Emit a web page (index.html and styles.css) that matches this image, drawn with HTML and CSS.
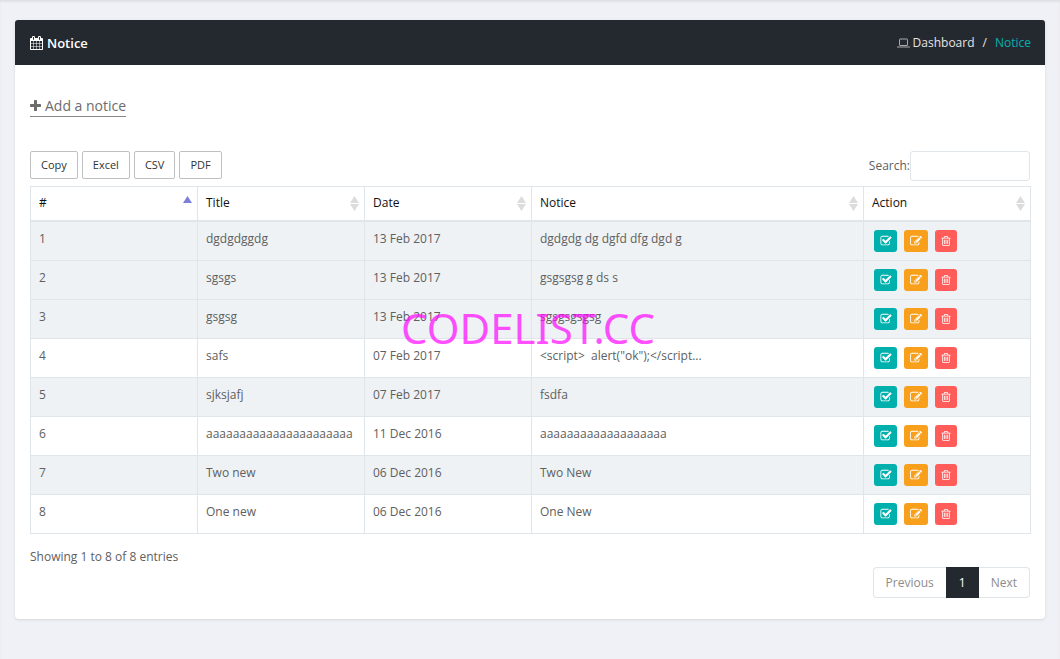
FILE: index.html
```html
<!DOCTYPE html>
<html lang="en">
<head>
<meta charset="utf-8">
<title>Notice</title>
<link rel="stylesheet" href="styles.css">
</head>
<body>
<svg class="sprite" aria-hidden="true">
  <symbol id="calendar" viewBox="64 0 1664 1792"><path d="M192 1664h288v-288h-288v288zm352 0h320v-288h-320v288zm-352-352h288v-320h-288v320zm352 0h320v-320h-320v320zm-352-384h288v-288h-288v288zm736 736h320v-288h-320v288zm-384-736h320v-288h-320v288zm768 736h288v-288h-288v288zm-384-352h320v-320h-320v320zm-352-864v-288q0-13-9.500-22.500t-22.500-9.500h-64q-13 0-22.500 9.500t-9.500 22.500v288q0 13 9.500 22.500t22.500 9.500h64q13 0 22.500-9.500t9.500-22.500zm736 864h288v-320h-288v320zm-384-384h320v-288h-320v288zm384 0h288v-288h-288v288zm32-480v-288q0-13-9.500-22.500t-22.500-9.500h-64q-13 0-22.500 9.500t-9.500 22.500v288q0 13 9.500 22.500t22.500 9.500h64q13 0 22.500-9.500t9.500-22.500zm384-64v1280q0 52-38 90t-90 38h-1408q-52 0-90-38t-38-90v-1280q0-52 38-90t90-38h128v-96q0-66 47-113t113-47h64q66 0 113 47t47 113v96h384v-96q0-66 47-113t113-47h64q66 0 113 47t47 113v96h128q52 0 90 38t38 90z"/></symbol>
  <symbol id="plus" viewBox="192 128 1408 1408"><path d="M1600 736v192q0 40-28 68t-68 28h-416v416q0 40-28 68t-68 28h-192q-40 0-68-28t-28-68v-416h-416q-40 0-68-28t-28-68v-192q0-40 28-68t68-28h416v-416q0-40 28-68t68-28h192q40 0 68 28t28 68v416h416q40 0 68 28t28 68z"/></symbol>
  <symbol id="laptop" viewBox="0 0 13 10"><path fill="none" stroke="currentColor" d="M2.500 7V1.500q0-.5.5-.5h7q.5 0 .5.500V7q0 .5-.5.500H3Q2.500 7.500 2.500 7z"/><path d="M0 8.500h13v.5q0 .6-1 .6H1Q0 9.600 0 9z"/></symbol>
  <symbol id="check" viewBox="0 0 1792 1792"><path d="M1472 930v318q0 119-84.500 203.500t-203.500 84.500h-832q-119 0-203.500-84.500t-84.500-203.500v-832q0-119 84.500-203.500t203.500-84.500h832q63 0 117 25 15 7 18 23 3 17-9 29l-49 49q-10 10-23 10-3 0-9-2-23-6-45-6h-832q-66 0-113 47t-47 113v832q0 66 47 113t113 47h832q66 0 113-47t47-113v-254q0-13 9-22l64-64q10-10 23-10 6 0 12 3 20 8 20 29zm231-489l-814 814q-24 24-57 24t-57-24l-430-430q-24-24-24-57t24-57l110-110q24-24 57-24t57 24l263 263 647-647q24-24 57-24t57 24l110 110q24 24 24 57t-24 57z"/></symbol>
  <symbol id="edit" viewBox="0 0 1792 1792"><path d="M888 1184l116-116-152-152-116 116v56h96v96h56zm440-720q-16-16-33 1l-350 350q-17 17-1 33t33-1l350-350q17-17 1-33zm80 594v190q0 119-84.500 203.500t-203.500 84.500h-832q-119 0-203.500-84.500t-84.500-203.500v-832q0-119 84.500-203.500t203.500-84.500h832q63 0 117 25 15 7 18 23 3 17-10 29l-49 49q-14 14-32 8-23-6-45-6h-832q-66 0-113 47t-47 113v832q0 66 47 113t113 47h832q66 0 113-47t47-113v-126q0-13 9-22l64-64q15-15 35-7t20 29zm-96-738l288 288-672 672h-288v-288zm444 132l-92 92-288-288 92-92q28-28 68-28t68 28l152 152q28 28 28 68t-28 68z"/></symbol>
  <symbol id="trash" viewBox="128 0 1536 1792"><path d="M704 736v576q0 14-9 23t-23 9h-64q-14 0-23-9t-9-23v-576q0-14 9-23t23-9h64q14 0 23 9t9 23zm256 0v576q0 14-9 23t-23 9h-64q-14 0-23-9t-9-23v-576q0-14 9-23t23-9h64q14 0 23 9t9 23zm256 0v576q0 14-9 23t-23 9h-64q-14 0-23-9t-9-23v-576q0-14 9-23t23-9h64q14 0 23 9t9 23zm128 724v-948h-896v948q0 22 7 40.500t14.500 27 10.500 8.500h832q3 0 10.500-8.500t14.500-27 7-40.500zm-672-1076h448l-48-117q-7-9-17-11h-317q-10 2-17 11zm928 32v64q0 14-9 23t-23 9h-96v948q0 83-47 143.500t-113 60.500h-832q-66 0-113-58.500t-47-141.500v-952h-96q-14 0-23-9t-9-23v-64q0-14 9-23t23-9h309l70-167q15-37 54-63t79-26h320q40 0 79 26t54 63l70 167h309q14 0 23 9t9 23z"/></symbol>
  <symbol id="sort" viewBox="0 0 9 15"><path d="M0 7 4.500 0 9 7zM0 8h9L4.500 15z"/></symbol>
  <symbol id="asc" viewBox="0 0 9 15"><path d="M0 7 4.500 0 9 7z"/></symbol>
</svg>
<main class="panel">
  <header class="panel-head">
    <h1 class="title"><svg class="icon-calendar"><use href="#calendar"/></svg>Notice</h1>
    <nav class="crumbs" aria-label="Breadcrumb">
      <a class="crumb" href="#"><svg class="icon-laptop"><use href="#laptop"/></svg>Dashboard</a>
      <span>/</span>
      <a class="crumb current" href="#">Notice</a>
    </nav>
  </header>
  <div class="panel-body">
    <a class="add" href="#"><svg class="icon-plus"><use href="#plus"/></svg>Add a notice</a>
    <div class="toolbar">
      <div class="exports">
        <button class="export" type="button">Copy</button>
        <button class="export" type="button">Excel</button>
        <button class="export" type="button">CSV</button>
        <button class="export" type="button">PDF</button>
      </div>
      <div class="search"><label for="search">Search:</label><input class="search-box" id="search" type="search"></div>
    </div>
    <div class="table-area">
      <table class="notices">
        <colgroup><col class="narrow"><col class="narrow"><col class="narrow"><col class="wide"><col class="narrow"></colgroup>
        <thead>
          <tr>
            <th><div class="head">#<svg class="sort active"><use href="#asc"/></svg></div></th>
            <th><div class="head">Title<svg class="sort"><use href="#sort"/></svg></div></th>
            <th><div class="head">Date<svg class="sort"><use href="#sort"/></svg></div></th>
            <th><div class="head">Notice<svg class="sort"><use href="#sort"/></svg></div></th>
            <th><div class="head">Action<svg class="sort"><use href="#sort"/></svg></div></th>
          </tr>
        </thead>
        <tbody>
          <tr class="shade"><td>1</td><td>dgdgdggdg</td><td>13 Feb 2017</td><td>dgdgdg dg dgfd dfg dgd g</td><td><div class="actions"><button class="act view" type="button" aria-label="View"><svg><use href="#check"/></svg></button><button class="act edit" type="button" aria-label="Edit"><svg><use href="#edit"/></svg></button><button class="act remove" type="button" aria-label="Delete"><svg><use href="#trash"/></svg></button></div></td></tr>
          <tr class="shade"><td>2</td><td>sgsgs</td><td>13 Feb 2017</td><td>gsgsgsg g ds s</td><td><div class="actions"><button class="act view" type="button" aria-label="View"><svg><use href="#check"/></svg></button><button class="act edit" type="button" aria-label="Edit"><svg><use href="#edit"/></svg></button><button class="act remove" type="button" aria-label="Delete"><svg><use href="#trash"/></svg></button></div></td></tr>
          <tr class="shade"><td>3</td><td>gsgsg</td><td>13 Feb 2017</td><td>sgsgsgsgsg</td><td><div class="actions"><button class="act view" type="button" aria-label="View"><svg><use href="#check"/></svg></button><button class="act edit" type="button" aria-label="Edit"><svg><use href="#edit"/></svg></button><button class="act remove" type="button" aria-label="Delete"><svg><use href="#trash"/></svg></button></div></td></tr>
          <tr><td>4</td><td>safs</td><td>07 Feb 2017</td><td>&lt;script&gt;&nbsp; alert("ok");&lt;/script...</td><td><div class="actions"><button class="act view" type="button" aria-label="View"><svg><use href="#check"/></svg></button><button class="act edit" type="button" aria-label="Edit"><svg><use href="#edit"/></svg></button><button class="act remove" type="button" aria-label="Delete"><svg><use href="#trash"/></svg></button></div></td></tr>
          <tr class="shade"><td>5</td><td>sjksjafj</td><td>07 Feb 2017</td><td>fsdfa</td><td><div class="actions"><button class="act view" type="button" aria-label="View"><svg><use href="#check"/></svg></button><button class="act edit" type="button" aria-label="Edit"><svg><use href="#edit"/></svg></button><button class="act remove" type="button" aria-label="Delete"><svg><use href="#trash"/></svg></button></div></td></tr>
          <tr><td>6</td><td>aaaaaaaaaaaaaaaaaaaaaa</td><td>11 Dec 2016</td><td>aaaaaaaaaaaaaaaaaaa</td><td><div class="actions"><button class="act view" type="button" aria-label="View"><svg><use href="#check"/></svg></button><button class="act edit" type="button" aria-label="Edit"><svg><use href="#edit"/></svg></button><button class="act remove" type="button" aria-label="Delete"><svg><use href="#trash"/></svg></button></div></td></tr>
          <tr class="shade"><td>7</td><td>Two new</td><td>06 Dec 2016</td><td>Two New</td><td><div class="actions"><button class="act view" type="button" aria-label="View"><svg><use href="#check"/></svg></button><button class="act edit" type="button" aria-label="Edit"><svg><use href="#edit"/></svg></button><button class="act remove" type="button" aria-label="Delete"><svg><use href="#trash"/></svg></button></div></td></tr>
          <tr><td>8</td><td>One new</td><td>06 Dec 2016</td><td>One New</td><td><div class="actions"><button class="act view" type="button" aria-label="View"><svg><use href="#check"/></svg></button><button class="act edit" type="button" aria-label="Edit"><svg><use href="#edit"/></svg></button><button class="act remove" type="button" aria-label="Delete"><svg><use href="#trash"/></svg></button></div></td></tr>
        </tbody>
      </table>
      <div class="watermark">CODELIST.CC</div>
    </div>
    <p class="info">Showing 1 to 8 of 8 entries</p>
    <nav class="pager" aria-label="Pages">
      <a class="page first" href="#">Previous</a><a class="page on" href="#" aria-current="page">1</a><a class="page last" href="#">Next</a>
    </nav>
  </div>
</main>
</body>
</html>
```
FILE: styles.css
```css
* { box-sizing: border-box; }
body {
  margin: 0;
  padding: 20px 15px 40px;
  background: #f0f1f6;
  box-shadow: inset 0 2px 2px #dfe0e5;
  font: 12px/20px "Open Sans", sans-serif;
  color: #606060;
}
a { color: inherit; text-decoration: none; }
svg { fill: currentColor; flex: none; }
.sprite { position: absolute; width: 0; height: 0; }
.panel {
  background: #fff;
  border-radius: 4px;
  box-shadow: 0 1px 3px #d5d6dc;
}
.panel-head {
  display: flex;
  justify-content: space-between;
  align-items: center;
  height: 45px;
  padding: 0 14px 0 15px;
  border-radius: 3px 3px 0 0;
  background: #242930;
  color: #fff;
}
.title {
  display: flex;
  align-items: center;
  gap: 4px;
  margin: 0;
  font-size: 13px;
  font-weight: 600;
}
.icon-calendar { width: 13px; height: 14px; }
.crumbs { display: flex; gap: 8px; color: #e4e4e4; }
.crumb { display: flex; align-items: center; gap: 3px; }
.current { color: #00b2ae; }
.icon-laptop { width: 13px; height: 10px; color: #aaa; }
.panel-body { padding: 30px 15px 21px; }
.add {
  display: inline-flex;
  align-items: center;
  gap: 4px;
  border-bottom: 1px solid #888;
  font-size: 14px;
  line-height: 21px;
  color: #6c6c6c;
}
.icon-plus { width: 11px; height: 11px; }
.toolbar {
  display: flex;
  justify-content: space-between;
  align-items: flex-start;
  margin-top: 34px;
}
.exports { display: flex; gap: 4px; }
.export {
  height: 28px;
  padding: 0 10px;
  border: 1px solid #bfc0c2;
  border-radius: 2px;
  background: #fff;
  font: 11px/20px "Open Sans", sans-serif;
  color: #333;
}
.search { display: flex; align-items: center; line-height: 28px; }
.search-box {
  width: 120px;
  height: 30px;
  padding: 0 8px;
  border: 1px solid #e0e5e9;
  border-radius: 3px;
  background: #fff;
  font: inherit;
}
.table-area { position: relative; margin-top: 5px; }
.notices {
  width: calc(100% + 1px);
  table-layout: fixed;
  border-collapse: collapse;
  border: 1px solid #e0e5e9;
}
.narrow { width: 16.7%; }
.wide { width: 33.2%; }
.notices th, .notices td {
  border: 1px solid #e0e5e9;
  padding: 7px 8px 11px;
  text-align: left;
  vertical-align: top;
}
.notices th {
  padding: 6px 5px 7px 8px;
  border-bottom-width: 2px;
  font-weight: 400;
  color: #111;
}
.shade { background: #eef2f5; }
.head { display: flex; justify-content: space-between; align-items: center; }
.sort { width: 9px; height: 15px; color: #dcdcdc; }
.active { color: #7c7fdc; }
.actions { display: flex; gap: 7px; height: 20px; padding: 1px 2px 0; }
.act {
  display: flex;
  flex: none;
  align-items: center;
  justify-content: center;
  height: 22px;
  border: 0;
  border-radius: 3px;
  padding: 0;
  color: #fff;
}
.act svg { width: 12px; height: 12px; }
.view { width: 23px; background: #00b0ad; }
.edit { width: 24px; background: #f8a01c; }
.remove { width: 22px; background: #ff5c5a; }
.remove svg { width: 10px; }
.watermark {
  position: absolute;
  top: 112px;
  left: 0;
  right: 4px;
  text-align: center;
  font: 42px/60px "Noto Sans", sans-serif;
  color: #ff00ff;
  opacity: 0.68;
  pointer-events: none;
}
.info { margin: 13px 0 0; }
.pager { display: flex; justify-content: flex-end; }
.page {
  padding: 5px 12px;
  border: 1px solid #e0e5e9;
  line-height: 19px;
  color: #8c8c8c;
}
.first { border-right: 0; border-radius: 4px 0 0 4px; }
.last { border-left: 0; border-radius: 0 4px 4px 0; }
.on { border-color: #242930; background: #242930; color: #fff; }
```
